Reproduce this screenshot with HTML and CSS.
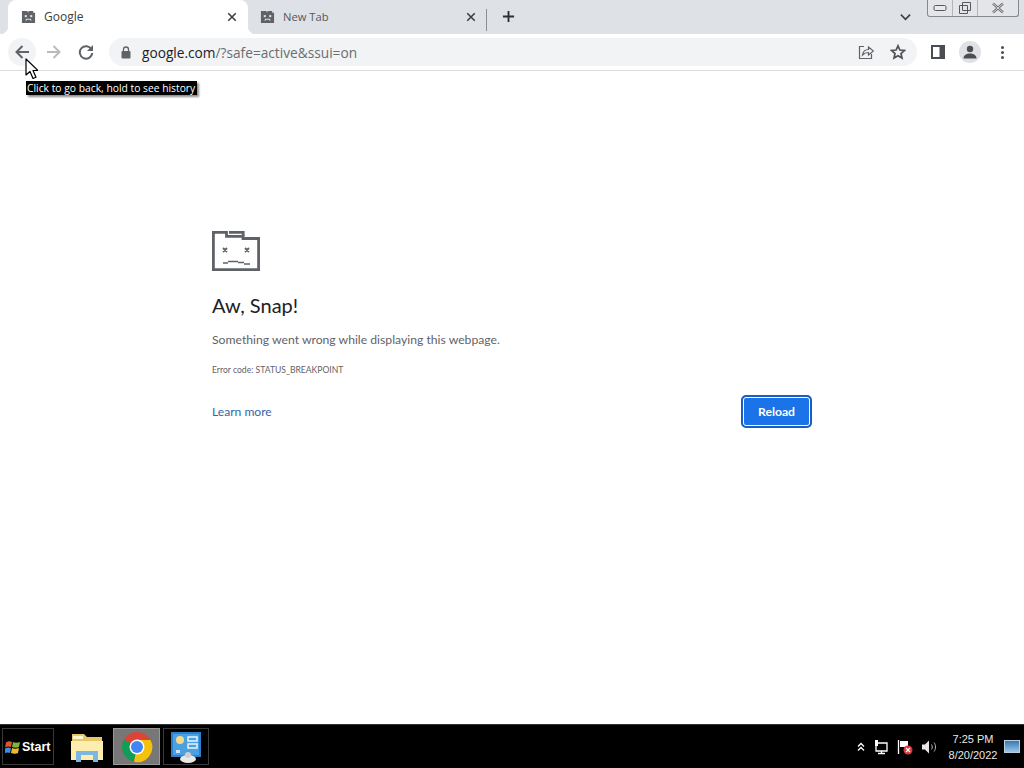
FILE: index.html
```html
<!DOCTYPE html>
<html lang="en">
<head>
<meta charset="utf-8">
<title>Google</title>
<link rel="stylesheet" href="styles.css">
</head>
<body>
<div class="screen">
  <header class="tabstrip">
    <div class="tab tab-active">
      <svg class="fav" viewBox="0 0 16 16"><path d="M1 2h6v1.500h1V2h5v2h2v11H1z" fill="#5f6368"/><g fill="#dfe1e5"><rect x="4" y="6.500" width="2.200" height="2.200"/><rect x="9.800" y="6.500" width="2.200" height="2.200"/><path d="M4.500 12.200l1.200-1.700h4.600l1.200 1.700h-1.400l-.6-.7H6.500l-.6.7z"/></g></svg>
      <span class="tab-title">Google</span>
      <svg class="tab-x" viewBox="0 0 12 12"><path d="M1.500 1.500l9 9M10.500 1.500l-9 9" stroke="#3c4043" stroke-width="1.900" fill="none"/></svg>
    </div>
    <div class="tab tab-idle">
      <svg class="fav" viewBox="0 0 16 16"><path d="M1 2h6v1.500h1V2h5v2h2v11H1z" fill="#5f6368"/><g fill="#dfe1e5"><rect x="4" y="6.500" width="2.200" height="2.200"/><rect x="9.800" y="6.500" width="2.200" height="2.200"/><path d="M4.500 12.200l1.200-1.700h4.600l1.200 1.700h-1.400l-.6-.7H6.500l-.6.7z"/></g></svg>
      <span class="tab-title tab-title-idle">New Tab</span>
      <svg class="tab-x" viewBox="0 0 12 12"><path d="M1.500 1.500l9 9M10.500 1.500l-9 9" stroke="#3c4043" stroke-width="1.900" fill="none"/></svg>
    </div>
    <div class="tab-sep"></div>
    <svg class="newtab" viewBox="0 0 14 14"><path d="M7 1v12M1 7h12" stroke="#2d2f33" stroke-width="2" fill="none"/></svg>
    <div class="strip-right">
      <svg class="chev" viewBox="0 0 12 8"><path d="M1 1.500l5 5 5-5" stroke="#3c4043" stroke-width="1.800" fill="none"/></svg>
      <div class="winctl">
        <div class="wc wc-min"><svg viewBox="0 0 14 8" width="14" height="8"><rect x="1" y="1.500" width="12" height="5" rx="1.500" fill="#e8eaed" stroke="#55585c"/></svg></div>
        <div class="wc wc-max"><svg viewBox="0 0 14 14" width="14" height="14"><path d="M4.500 1.500h8v8h-8zM1.500 4.500h8v8h-8z" fill="#e3e5e9" stroke="#55585c"/></svg></div>
        <div class="wc wc-close"><svg viewBox="0 0 14 12" width="14" height="12"><path d="M2 1.500l10 9M12 1.500l-10 9" stroke="#6b6e72" stroke-width="2.400" fill="none"/><path d="M2 1.500l10 9M12 1.500l-10 9" stroke="#f0f1f3" stroke-width="0.800" fill="none"/></svg></div>
      </div>
    </div>
  </header>

  <nav class="toolbar">
    <div class="tbtn tbtn-hover"><svg viewBox="0 0 16 16" width="16" height="16"><path d="M15 8H2.500M8.500 2l-6 6 6 6" stroke="#5f6368" stroke-width="2" fill="none"/></svg></div>
    <div class="tbtn"><svg viewBox="0 0 16 16" width="16" height="16"><path d="M1 8h12.500M7.500 2l6 6-6 6" stroke="#b9bbbe" stroke-width="2" fill="none"/></svg></div>
    <div class="tbtn"><svg viewBox="0 0 16 16" width="16" height="16"><path d="M13.500 5.500A6.200 6.200 0 1 0 14.200 9" stroke="#5f6368" stroke-width="2" fill="none"/><path d="M15 1v6H9z" fill="#5f6368"/></svg></div>
    <div class="omnibox">
      <svg class="lock" viewBox="0 0 10 13" width="10" height="13"><path d="M2.500 5V3.500a2.500 2.500 0 0 1 5 0V5" stroke="#5f6368" stroke-width="1.300" fill="none"/><rect x="0.500" y="5" width="9" height="7.500" rx="1" fill="#5f6368"/></svg>
      <span class="url"><span class="url-host">google.com</span>/?safe=active&amp;ssui=on</span>
      <div class="omni-right">
        <svg viewBox="0 0 16 16" width="16" height="16"><path d="M6 2.500H1.500v12h12V10" stroke="#5f6368" stroke-width="1.200" fill="none"/><path d="M4.500 11c.5-3.500 3-5.500 6-5.500V3l5 4-5 4V8.500c-2.500 0-4.500 1-6 2.500z" stroke="#5f6368" stroke-width="1.200" fill="none"/></svg>
        <svg viewBox="0 0 16 16" width="16" height="16"><path d="M8 1.800l1.900 4.200 4.500.5-3.400 3 1 4.500L8 11.700 4 14l1-4.500-3.400-3 4.500-.5z" stroke="#4f5357" stroke-width="1.700" fill="none"/></svg>
      </div>
    </div>
    <svg class="side" viewBox="0 0 14 14" width="14" height="14"><path d="M0 0h14v14H0z" fill="#4a4d51"/><rect x="2" y="2" width="6.500" height="10" fill="#fff"/></svg>
    <div class="avatar"><svg viewBox="0 0 14 14" width="14" height="14"><circle cx="7" cy="4" r="3.200" fill="#4a4d51"/><path d="M0.500 13.500c0-3.500 3-5 6.500-5s6.500 1.500 6.500 5z" fill="#4a4d51"/></svg></div>
    <div class="kebab"><i></i><i></i><i></i></div>
  </nav>

  <main class="page">
    <div class="err">
      <svg class="sad" viewBox="0 0 48 40" width="48" height="40"><path d="M1.400 40V1.400H14.500V5.400H31V7.500H46.600V38.600H0" fill="none" stroke="#5f6368" stroke-width="2.800"/><path d="M17 1.400H31.200V5" fill="none" stroke="#5f6368" stroke-width="2.800"/><path d="M11 17l4 4M15 17l-4 4M33 17l4 4M37 17l-4 4" stroke="#5f6368" stroke-width="1.800" fill="none"/><path d="M11 32h5M16 30.500h10M26 31.500h6M32 33h6" stroke="#5f6368" stroke-width="1.600" fill="none"/></svg>
      <h1 class="err-title">Aw, Snap!</h1>
      <p class="err-msg">Something went wrong while displaying this webpage.</p>
      <p class="err-code">Error code: STATUS_BREAKPOINT</p>
      <div class="err-actions">
        <a class="learn">Learn more</a>
        <div class="reload"><span>Reload</span></div>
      </div>
    </div>
  </main>

  <footer class="taskbar">
    <div class="start">
      <svg viewBox="0 0 16 16" width="16" height="16"><path d="M1 3.500q3-2 6-.5l-1 5q-3-1-6 .5z" fill="#e0532f"/><path d="M8 3q3 1.500 7 0l-1 5q-3 1.500-7 0z" fill="#7fb53a"/><path d="M0 9.500q3-1.500 6-.5l-1 5q-3-1-6 .5z" fill="#3d8ede"/><path d="M7 9q3 1.500 7 0l-1 5q-3 1.500-7 0z" fill="#f2b92e"/></svg>
      <span>Start</span>
    </div>
    <div class="task task-folder">
      <svg viewBox="0 0 34 32" width="34" height="32"><path d="M2 3h12l3 3h15v23H2z" fill="#e8c768"/><path d="M1 10h32v19H1z" fill="#fbeeb0"/><path d="M3 5h10v3H3z" fill="#fff7d4"/><path d="M6 20h22v11h-5v-7H11v7H6z" fill="#7bb7de"/></svg>
    </div>
    <div class="task task-chrome">
      <svg viewBox="0 0 32 32" width="32" height="32"><circle cx="16" cy="16" r="15" fill="#db4437"/><path d="M16 16L3 8.500A15 15 0 0 0 13 30.700z" fill="#0f9d58"/><path d="M16 9h13.500A15 15 0 0 1 13 30.700L16 16z" fill="#f4c20d"/><circle cx="16" cy="16" r="7.500" fill="#fff"/><circle cx="16" cy="16" r="6" fill="#4285f4"/></svg>
    </div>
    <div class="task task-panel">
      <svg viewBox="0 0 32 32" width="32" height="32"><rect x="1" y="1" width="30" height="25" fill="#2d7fd0"/><rect x="3" y="3" width="26" height="21" fill="#4aa0e0"/><circle cx="10" cy="9" r="4" fill="#f5d98a"/><path d="M18 6h9v4h-9zM18 13h9v4h-9z" fill="none" stroke="#e6f3fb" stroke-width="1.500"/><path d="M6 19h4v3H6z" fill="#cfe6f6"/><ellipse cx="18" cy="28" rx="8" ry="4" fill="#e8e8e8"/><circle cx="18" cy="24" r="3" fill="#cfcfcf"/></svg>
    </div>
    <div class="task-gap"></div>
    <div class="tray">
      <svg viewBox="0 0 8 10" width="8" height="10"><path d="M1 4.500l3-3 3 3M1 8.500l3-3 3 3" stroke="#fff" stroke-width="1.300" fill="none"/></svg>
      <svg viewBox="0 0 16 16" width="16" height="16"><path d="M3 4h11v8H3zM8.500 12v2M5 14.500h7" stroke="#fff" stroke-width="1.300" fill="none"/><rect x="2" y="1" width="3" height="6" fill="#fff"/></svg>
      <svg viewBox="0 0 16 16" width="16" height="16"><path d="M1.500 1v14" stroke="#fff" stroke-width="1.300"/><path d="M3 2h8v6H3z" fill="#fff"/><circle cx="11" cy="11" r="4.500" fill="#d9393b"/><path d="M9 9l4 4M13 9l-4 4" stroke="#fff" stroke-width="1.200"/></svg>
      <svg viewBox="0 0 16 16" width="16" height="16"><path d="M1 5.500h3l4-4v13l-4-4H1z" fill="#e8e8e8"/><path d="M10.500 5.500c1 1.500 1 3.500 0 5M13 3.500c2 2.500 2 6.500 0 9" stroke="#b8b8b8" fill="none"/></svg>
    </div>
    <div class="clock"><span>7:25 PM</span><span>8/20/2022</span></div>
    <div class="desk-show"></div>
  </footer>

  <div class="tooltip">Click to go back, hold to see history</div>
  <svg class="cursor" viewBox="0 0 13 22" width="13" height="22"><path d="M1 1v16l4-3.500 3 7 3-1.300-3-6.700h5z" fill="#fff" stroke="#000" stroke-width="1.200" stroke-linejoin="round"/></svg>
</div>
</body>
</html>
```
FILE: styles.css
```css
* { box-sizing: border-box; }
html, body { margin: 0; padding: 0; }
body { font-family: "Lato", "Open Sans", "Liberation Sans", sans-serif; background: #fff; }
.screen { position: relative; width: 1024px; height: 768px; display: flex; flex-direction: column; overflow: hidden; }

.tabstrip { height: 34px; background: #dee1e6; display: flex; align-items: flex-end; padding-left: 8px; flex: none; }
.tab { width: 240px; height: 34px; display: flex; align-items: center; padding: 0 11px 1px 13px; flex: none; position: relative; }
.tab-active { background: #fff; border-radius: 8px 8px 0 0; }
.tab-active::before, .tab-active::after { content: ""; position: absolute; bottom: 0; width: 8px; height: 8px; }
.tab-active::before { left: -8px; background: radial-gradient(circle at 0 0, #dee1e6 8px, #fff 8.500px); }
.tab-active::after { right: -8px; background: radial-gradient(circle at 100% 0, #dee1e6 8px, #fff 8.500px); }
.fav { width: 15px; height: 15px; flex: none; }
.tab-title { font-family: "Open Sans", sans-serif; font-size: 12px; color: #3c4043; margin-left: 8px; flex: 1; white-space: nowrap; }
.tab-title-idle { color: #55585c; font-size: 11.200px; }
.tab-x { width: 10px; height: 10px; flex: none; }
.tab-idle { width: 238px; padding-left: 12px; padding-right: 10px; }
.tab-sep { width: 1px; height: 22px; background: #8a8d91; margin: 0 0 3px 0; flex: none; }
.newtab { width: 13px; height: 13px; margin: 0 0 11px 15px; flex: none; }
.strip-right { flex: 1; display: flex; justify-content: flex-end; align-self: stretch; }
.chev { width: 11px; height: 8px; margin: 13px 16px 0 0; flex: none; }
.winctl { display: flex; height: 17px; margin-right: 5px; border: 1px solid #85888c; border-top: 0; border-radius: 0 0 3px 3px; background: #e3e5e9; }
.wc { display: flex; align-items: center; justify-content: center; }
.wc-min { width: 25px; border-right: 1px solid #b2b5b9; }
.wc-max { width: 25px; border-right: 1px solid #b2b5b9; }
.wc-close { width: 40px; }

.toolbar { height: 37px; background: #fff; border-bottom: 1px solid #dadce0; display: flex; align-items: center; padding-left: 6px; flex: none; }
.tbtn { width: 32px; height: 28px; display: flex; align-items: center; justify-content: center; }
.tbtn-hover { width: 28px; margin-right: 2px; margin-left: 2px; background: #f1f3f4; border-radius: 50%; }
.omnibox { width: 808px; height: 28px; margin-left: 7px; margin-right: 9px; border-radius: 14px; background: #f1f3f4; display: flex; align-items: center; padding-left: 12px; flex: none; }
.lock { flex: none; }
.url { font-family: "Open Sans", sans-serif; font-size: 13.700px; color: #6a6d71; margin-left: 11px; white-space: nowrap; }
.url-host { color: #202124; }
.omni-right { margin-left: auto; display: flex; gap: 16px; padding-right: 11px; }
.side { flex: none; margin-left: 5px; }
.avatar { width: 22px; height: 22px; border-radius: 50%; background: #dfe1e5; display: flex; align-items: center; justify-content: center; margin-left: 14px; flex: none; }
.kebab { display: flex; flex-direction: column; gap: 2px; margin-left: 20px; flex: none; }
.kebab i { display: block; width: 3px; height: 3px; border-radius: 50%; background: #4a4d51; }

.page { flex: 1; background: #fff; padding-top: 160px; }
.err { width: 600px; margin: 0 auto; color: #5f6368; }
.sad { display: block; }
.err-title { font-size: 20px; font-weight: 400; line-height: 24px; color: #202124; margin: 22px 0 0; }
.err-msg { font-size: 12.200px; line-height: 20px; margin: 13px 0 0; color: #5f6368; }
.err-code { font-size: 8.600px; line-height: 14px; margin: 13px 0 0; color: #5f6368; }
.err-actions { display: flex; justify-content: space-between; align-items: center; margin-top: 18px; }
.learn { font-size: 12.100px; color: #3367a8; }
.reload { width: 71px; height: 33px; background: #1a73e8; border-radius: 5px; border: 2px solid #1a5fc0; box-shadow: inset 0 0 0 1px #fff; display: flex; align-items: center; justify-content: center; color: #fff; font-size: 12.200px; font-weight: 700; }

.taskbar { height: 44px; background: #000; border-top: 1px solid #333; display: flex; align-items: center; flex: none; color: #fff; }
.start { width: 52px; height: 37px; margin-left: 2px; border: 1px solid #3a3a3a; display: flex; align-items: center; gap: 1px; padding-left: 2px; font-family: "Liberation Sans", sans-serif; font-size: 12.500px; font-weight: 700; flex: none; }
.task { height: 37px; display: flex; align-items: center; justify-content: center; flex: none; }
.task-folder { width: 46px; margin-left: 10px; }
.task-chrome { width: 47px; margin-left: 3px; background: #777; border: 1px solid #999; }
.task-panel { width: 46px; margin-left: 3px; border: 1px solid #3a3a3a; }
.task-gap { flex: 1; }
.tray { display: flex; align-items: center; gap: 8px; }
.clock { width: 58px; margin-left: 7px; display: flex; flex-direction: column; align-items: center; font-family: "Liberation Sans", sans-serif; font-size: 11px; line-height: 16px; color: #e8e8e8; flex: none; }
.desk-show { width: 16px; height: 13px; margin: 0 4px 0 2px; background: linear-gradient(#3a78b0, #9cc7e6); border: 1px solid #b8d0e2; flex: none; }

.tooltip { position: absolute; left: 26px; top: 81px; height: 14px; padding: 0 2px 0 1px; background: #000; color: #fff; font-family: "Open Sans", sans-serif; font-size: 10.300px; line-height: 14px; white-space: nowrap; box-shadow: 2px 2px 2px rgba(0,0,0,.45); }
.cursor { position: absolute; left: 25px; top: 58px; }
```
